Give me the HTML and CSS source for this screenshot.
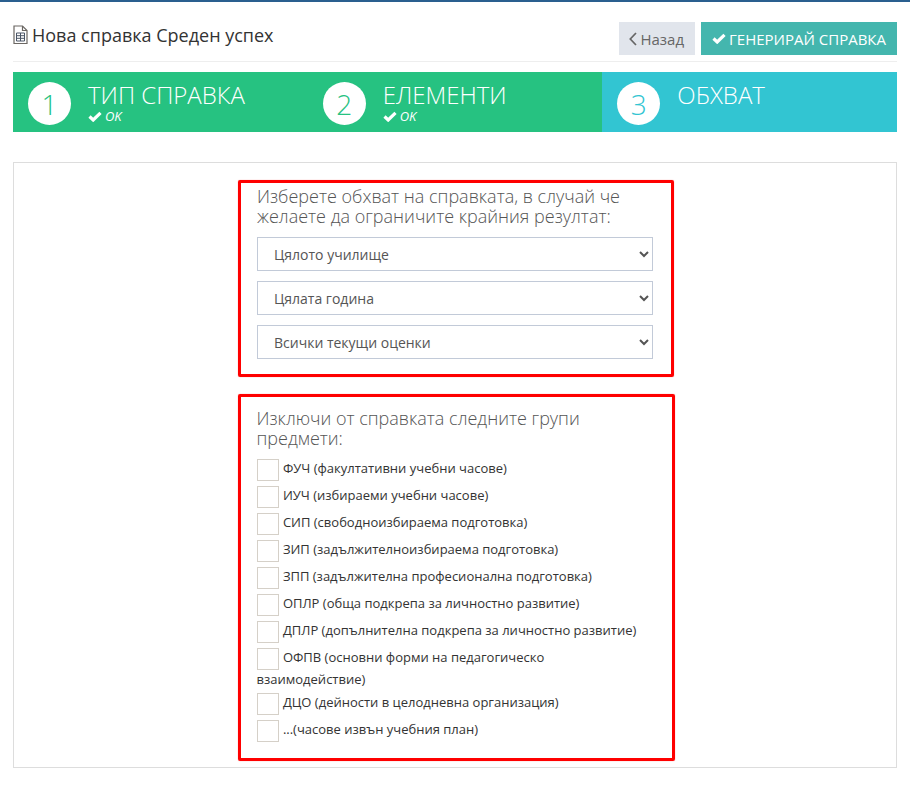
FILE: index.html
```html
<!DOCTYPE html>
<html lang="bg">
<head>
  <meta charset="UTF-8" />
  <title>Нова справка Среден успех</title>
  <link rel="stylesheet" href="styles.css">
</head>
<body>
  <header class="page-head">
    <h1 class="page-title">
      <svg class="title-icon" width="15" height="20" viewBox="0 0 15 20">
        <path d="M1 1h8.500L14 5.500V18.500H1z" fill="none" stroke="#6b6763" stroke-width="1.200"/>
        <path d="M9.500 1v4.500H14" fill="none" stroke="#6b6763" stroke-width="1.200"/>
        <path d="M3.500 8h8v8h-8zM3.500 10.700h8M3.500 13.300h8M7.500 8v8" fill="none" stroke="#4a5566" stroke-width="1"/>
      </svg>
      Нова справка Среден успех
    </h1>
    <div class="head-actions">
      <a class="btn btn-back" href="#">
        <svg width="8" height="14" viewBox="0 0 8 14"><path d="M7 1 1.300 7 7 13" fill="none" stroke="#666" stroke-width="1.700"/></svg>
        Назад
      </a>
      <a class="btn btn-generate" href="#">
        <svg width="14" height="11" viewBox="0 0 14 11"><path d="M1.500 5.500 5.200 9 12.500 1.800" fill="none" stroke="#fff" stroke-width="3.200"/></svg>
        ГЕНЕРИРАЙ СПРАВКА
      </a>
    </div>
  </header>

  <div class="steps">
    <div class="step done">
      <span class="step-num">1</span>
      <div class="step-text">
        <div class="step-title">ТИП СПРАВКА</div>
        <div class="step-ok">
          <svg width="14" height="11" viewBox="0 0 14 11"><path d="M1.500 5.500 5.200 9 12.500 1.800" fill="none" stroke="#fff" stroke-width="3.200"/></svg>
          OK
        </div>
      </div>
    </div>
    <div class="step done">
      <span class="step-num">2</span>
      <div class="step-text">
        <div class="step-title">ЕЛЕМЕНТИ</div>
        <div class="step-ok">
          <svg width="14" height="11" viewBox="0 0 14 11"><path d="M1.500 5.500 5.200 9 12.500 1.800" fill="none" stroke="#fff" stroke-width="3.200"/></svg>
          OK
        </div>
      </div>
    </div>
    <div class="step current">
      <span class="step-num">3</span>
      <div class="step-text">
        <div class="step-title">ОБХВАТ</div>
      </div>
    </div>
  </div>

  <section class="panel">
    <div class="red-box scope-box">
      <h3 class="box-title">Изберете обхват на справката, в случай че желаете да ограничите крайния резултат:</h3>
      <select class="field">
        <option>Цялото училище</option>
      </select>
      <select class="field">
        <option>Цялата година</option>
      </select>
      <select class="field">
        <option>Всички текущи оценки</option>
      </select>
    </div>

    <div class="red-box exclude-box">
      <h3 class="box-title">Изключи от справката следните групи предмети:</h3>
      <label class="check"><input type="checkbox"> ФУЧ (факултативни учебни часове)</label>
      <label class="check"><input type="checkbox"> ИУЧ (избираеми учебни часове)</label>
      <label class="check"><input type="checkbox"> СИП (свободноизбираема подготовка)</label>
      <label class="check"><input type="checkbox"> ЗИП (задължителноизбираема подготовка)</label>
      <label class="check"><input type="checkbox"> ЗПП (задължителна професионална подготовка)</label>
      <label class="check"><input type="checkbox"> ОПЛР (обща подкрепа за личностно развитие)</label>
      <label class="check"><input type="checkbox"> ДПЛР (допълнителна подкрепа за личностно развитие)</label>
      <label class="check"><input type="checkbox"> ОФПВ (основни форми на педагогическо взаимодействие)</label>
      <label class="check"><input type="checkbox"> ДЦО (дейности в целодневна организация)</label>
      <label class="check"><input type="checkbox"> ...(часове извън учебния план)</label>
    </div>
  </section>
</body>
</html>
```

FILE: styles.css
```css
:root {
  --green: #26c281;
  --cyan: #32c5d2;
  --teal: #44b6ae;
  --text: #333;
  --border: #ddd;
  --red: #f00;
}
* {
  box-sizing: border-box;
}
body {
  font-family: 'Open Sans', sans-serif;
  background: #fff;
  color: var(--text);
  margin: 0;
  padding: 0 13px;
  border-top: 2px solid #2a5f8f;
}
.page-head {
  display: flex;
  justify-content: space-between;
  align-items: flex-start;
  height: 60px;
  padding-top: 20px;
  border-bottom: 1px solid #eee;
}
.page-title {
  display: flex;
  align-items: center;
  gap: 4px;
  margin: 1px 0 0;
  font-size: 18px;
  font-weight: 400;
  line-height: 24px;
}
.head-actions {
  display: flex;
  gap: 6px;
}
.btn {
  display: flex;
  align-items: center;
  gap: 3px;
  height: 33px;
  padding: 0 11px;
  font-size: 15px;
  text-decoration: none;
}
.btn-back {
  padding-left: 10px;
  background: #e1e5ec;
  color: #666;
}
.btn-generate {
  background: var(--teal);
  color: #fff;
}
.steps {
  display: grid;
  grid-template-columns: repeat(3, 1fr);
  grid-template-rows: 60px;
  margin-top: 10px;
}
.step {
  display: flex;
  gap: 17px;
  padding: 10px 15px;
  color: #fff;
}
.step.done {
  background: var(--green);
}
.step.current {
  background: var(--cyan);
}
.step-num {
  flex: none;
  width: 43px;
  height: 43px;
  border-radius: 50%;
  background: #fff;
  font-size: 28px;
  font-weight: 300;
  line-height: 44px;
  text-align: center;
}
.done .step-num {
  color: var(--green);
}
.current .step-num {
  color: var(--cyan);
}
.step-title {
  font-size: 24px;
  font-weight: 300;
  line-height: 26px;
}
.step-ok {
  display: flex;
  align-items: center;
  gap: 3px;
  margin-top: 1px;
  font-size: 13px;
  font-style: italic;
  font-weight: 500;
  line-height: 15px;
}
.panel {
  display: flex;
  flex-direction: column;
  align-items: center;
  gap: 17px;
  height: 606px;
  margin-top: 30px;
  padding: 17px 0 0 2px;
  border: 1px solid var(--border);
}
.red-box {
  border: 3px solid var(--red);
  border-radius: 2px;
  box-shadow: 0 0 1px rgba(255, 0, 0, 0.6);
}
.scope-box {
  width: 436px;
  height: 197px;
  padding: 4px 18px 0 16px;
}
.exclude-box {
  width: 437px;
  height: 367px;
  padding: 12px 18px 0 16px;
}
.box-title {
  margin: 0 0 10px;
  color: #555;
  font-size: 18px;
  font-weight: 300;
  line-height: 19.800px;
}
.field {
  display: block;
  width: 100%;
  height: 34px;
  margin-bottom: 10px;
  padding: 2px 12px 0;
  background: #fff;
  border: 1px solid #c2cad8;
  border-radius: 0;
  color: #555;
  font-family: inherit;
  font-size: 14px;
}
.check {
  display: block;
  margin-bottom: 5px;
  font-size: 13px;
  line-height: 18px;
}
.check input {
  appearance: none;
  width: 22px;
  height: 22px;
  margin: 0 1px 0 0;
  background: #fff;
  border: 1px solid #d5d0c8;
  vertical-align: middle;
}
```
